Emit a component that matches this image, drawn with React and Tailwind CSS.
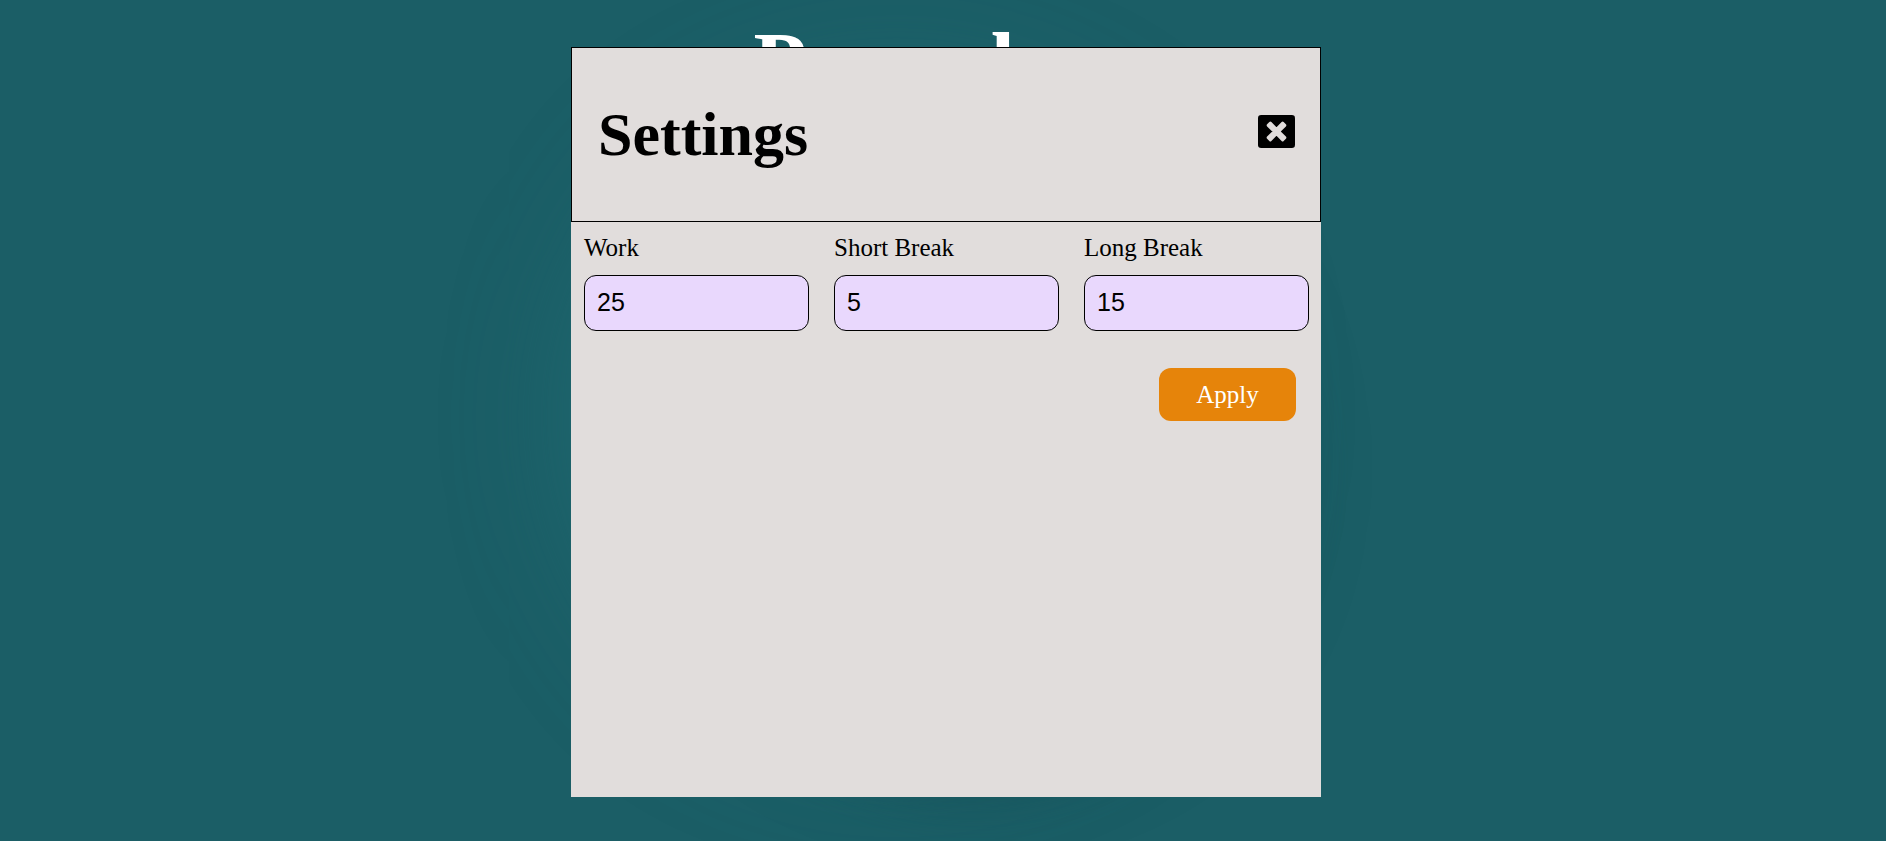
const fields = [
  { id: "work", label: "Work", value: 25 },
  { id: "short-break", label: "Short Break", value: 5 },
  { id: "long-break", label: "Long Break", value: 15 },
];

function CloseIcon() {
  return (
    <svg viewBox="0 0 512 512" className="size-[37px]" aria-hidden="true">
      <rect y="28" width="512" height="456" rx="44" fill="currentColor" />
      <path
        d="M-22-142H22V-22H142V22H22V142H-22V22H-142V-22H-22Z"
        transform="translate(256 256) rotate(45)"
        fill="#e1dddc"
        stroke="#e1dddc"
        strokeWidth="40"
        strokeLinejoin="round"
      />
    </svg>
  );
}

function Timer() {
  return (
    <main className="flex flex-col items-center gap-4 pt-[13px] pl-[6px]">
      <h1 className="relative z-10 text-[87px] leading-[100px] font-bold text-white">Pomodoro</h1>
      <div className="aspect-square w-full max-w-[625px] rounded-full bg-[#1b5e66] shadow-[25px_25px_75px_#164d54,-50px_-25px_125px_#206b73]" />
    </main>
  );
}

function Field({ id, label, value }) {
  return (
    <div className="flex min-w-0 flex-col gap-[14px] pt-3 pr-3 pl-[13px]">
      <label htmlFor={id} className="leading-[27px]">
        {label}
      </label>
      <input
        id={id}
        type="text"
        inputMode="numeric"
        defaultValue={value}
        className="h-14 w-full rounded-xl border border-black bg-[#e9d8fd] px-3 pb-0.5 font-['Liberation_Sans',Arial,sans-serif] outline-none"
      />
    </div>
  );
}

function SettingsDialog() {
  return (
    <div className="fixed inset-0 z-20 flex items-center justify-center pt-[3px] pl-[6px]">
      <section
        role="dialog"
        aria-labelledby="settings-title"
        className="min-h-[750px] w-full max-w-[750px] bg-[#e1dddc] text-[25px] text-black"
      >
        <header className="flex items-center justify-between border border-black py-[50px] pr-[25px] pl-[26px]">
          <h2 id="settings-title" className="text-[62px] leading-[73px] font-bold">
            Settings
          </h2>
          <button type="button" aria-label="Close settings" className="pb-1.5">
            <CloseIcon />
          </button>
        </header>
        <form onSubmit={(event) => event.preventDefault()}>
          <div className="grid grid-cols-3">
            {fields.map((field) => (
              <Field key={field.id} {...field} />
            ))}
          </div>
          <div className="flex justify-end px-[25px] pt-[37px]">
            <button
              type="submit"
              className="min-w-[137px] rounded-xl bg-[#e6840a] py-3 leading-[29px] text-white"
            >
              Apply
            </button>
          </div>
        </form>
      </section>
    </div>
  );
}

export default function App() {
  return (
    <div className="h-screen overflow-hidden bg-[#1b5e66] font-['Liberation_Serif','Times_New_Roman',serif]">
      <Timer />
      <SettingsDialog />
    </div>
  );
}
